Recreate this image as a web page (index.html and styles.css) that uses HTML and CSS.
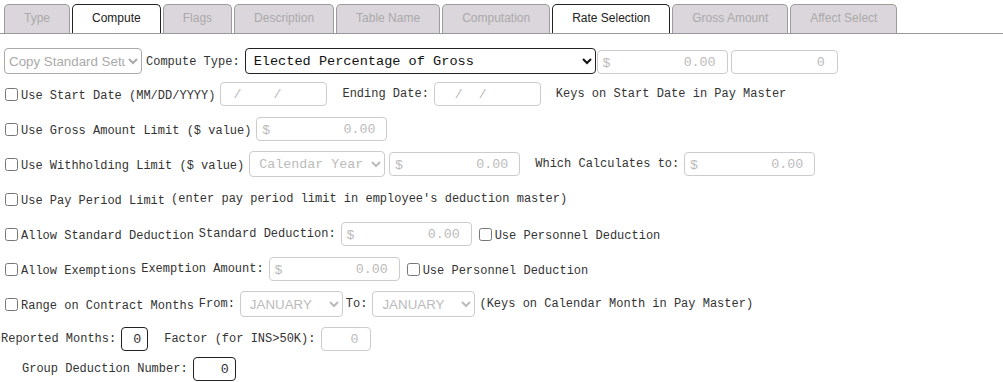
FILE: index.html
```html
<!DOCTYPE html>
<html lang="en">
<head>
  <meta charset="UTF-8">
  <meta name="viewport" content="width=device-width, initial-scale=1.0">
  <title>Deduction Setup - Compute</title>
  <link rel="stylesheet" href="styles.css">
</head>
<body>
  <!-- Abas do cadastro -->
  <ul class="tabs">
    <li>Type</li>
    <li class="active">Compute</li>
    <li>Flags</li>
    <li>Description</li>
    <li>Table Name</li>
    <li>Computation</li>
    <li class="active">Rate Selection</li>
    <li>Gross Amount</li>
    <li>Affect Select</li>
  </ul>

  <form class="compute-form">
    <div class="row">
      <select class="field copy-setup"><option>Copy Standard Setup</option></select>
      <span class="lbl gap4">Compute Type:</span>
      <select class="field compute-type"><option>Elected Percentage of Gross</option></select>
      <span class="money gap1"><span class="cur">$</span><input value="0.00"></span>
      <input class="field num count gap3" value="0">
    </div>

    <div class="row">
      <label class="check"><input type="checkbox"><span>Use Start Date (MM/DD/YYYY)</span></label>
      <input class="field date" value=" /    /">
      <span class="lbl gap15">Ending Date:</span>
      <input class="field date date-end" value="  /  /">
      <span class="lbl gap15">Keys on Start Date in Pay Master</span>
    </div>

    <div class="row">
      <label class="check"><input type="checkbox"><span>Use Gross Amount Limit ($ value)</span></label>
      <span class="money"><span class="cur">$</span><input value="0.00"></span>
    </div>

    <div class="row">
      <label class="check"><input type="checkbox"><span>Use Withholding Limit ($ value)</span></label>
      <select class="field year"><option>Calendar Year</option></select>
      <span class="money gap4"><span class="cur">$</span><input value="0.00"></span>
      <span class="lbl gap15">Which Calculates to:</span>
      <span class="money"><span class="cur">$</span><input value="0.00"></span>
    </div>

    <div class="row">
      <label class="check"><input type="checkbox"><span>Use Pay Period Limit</span></label>
      <span class="lbl gap6">(enter pay period limit in employee's deduction master)</span>
    </div>

    <div class="row">
      <label class="check"><input type="checkbox"><span>Allow Standard Deduction</span></label>
      <span class="lbl">Standard Deduction:</span>
      <span class="money"><span class="cur">$</span><input value="0.00"></span>
      <label class="check inline"><input type="checkbox"><span>Use Personnel Deduction</span></label>
    </div>

    <div class="row">
      <label class="check"><input type="checkbox"><span>Allow Exemptions</span></label>
      <span class="lbl">Exemption Amount:</span>
      <span class="money"><span class="cur">$</span><input value="0.00"></span>
      <label class="check inline"><input type="checkbox"><span>Use Personnel Deduction</span></label>
    </div>

    <div class="row">
      <label class="check"><input type="checkbox"><span>Range on Contract Months</span></label>
      <span class="lbl">From:</span>
      <select class="field month"><option>JANUARY</option></select>
      <span class="lbl gap3">To:</span>
      <select class="field month"><option>JANUARY</option></select>
      <span class="lbl gap4">(Keys on Calendar Month in Pay Master)</span>
    </div>

    <div class="row row-tight">
      <span class="lbl">Reported Months:</span>
      <input class="field num dark months" value="0">
      <span class="lbl gap16">Factor (for INS&gt;50K):</span>
      <input class="field num factor gap6" value="0">
    </div>

    <div class="row">
      <span class="lbl group-lbl">Group Deduction Number:</span>
      <input class="field num dark group" value="0">
    </div>
  </form>
</body>
</html>
```

FILE: styles.css
```css
/* Estilização geral */
body {
  margin: 0;
  font-family: "Liberation Mono", "DejaVu Sans Mono", monospace;
  font-size: 12px;
  color: #333;
  background: #fff;
}
/* Abas */
.tabs {
  display: flex;
  gap: 2px;
  list-style: none;
  margin: 0;
  padding: 4px 0 0 4px;
  border-bottom: 1px solid #999;
}
.tabs li {
  box-sizing: border-box;
  height: 29px;
  padding: 0 19px;
  line-height: 27px;
  font-family: "Liberation Sans", Arial, sans-serif;
  font-size: 12px;
  color: #aaa;
  background: #dbd6db;
  border: 1px solid #9c9c9c;
  border-bottom: none;
  border-radius: 5px 5px 0 0;
}
.tabs li.active {
  background: #fff;
  color: #222;
  border-color: #222;
}
/* Campos */
.field {
  box-sizing: border-box;
  height: 24px;
  font-family: "Liberation Mono", monospace;
  font-size: 13.33px;
  color: #bbb;
  background: #fff;
  border: 1px solid #ccc;
  border-radius: 4px;
  outline: none;
}
select.field {
  height: 26px;
  padding: 0 0 0 5px;
}
.copy-setup {
  width: 138px;
  padding-left: 0 !important;
  font-family: "Liberation Sans", Arial, sans-serif !important;
  color: #aaa !important;
  border-color: #aaa !important;
}
.compute-type {
  width: 351px;
  padding-left: 4px !important;
  font-size: 13.6px;
  color: #111 !important;
  border-color: #222 !important;
}
.year {
  width: 136px;
}
.month {
  width: 103px;
  font-family: "Liberation Sans", Arial, sans-serif !important;
}
.num {
  text-align: right;
  padding: 0 12px 0 4px;
}
.count {
  width: 107px;
}
.factor {
  width: 50px;
}
.dark {
  color: #333;
  border-color: #222;
  padding-right: 6px;
}
.months {
  width: 27px;
}
.group {
  width: 43px;
}
.date {
  width: 107px;
  padding: 0 4px;
  white-space: pre;
}
/* Valores em dólar */
.money {
  box-sizing: border-box;
  display: flex;
  align-items: center;
  width: 131px;
  height: 24px;
  border: 1px solid #ccc;
  border-radius: 4px;
}
.money .cur {
  padding-left: 5px;
  font-family: "Liberation Sans", Arial, sans-serif;
  font-size: 13.33px;
  color: #bbb;
}
.money input {
  flex: 1;
  min-width: 0;
  border: none;
  outline: none;
  padding: 0 11px 0 0;
  text-align: right;
  font-family: "Liberation Mono", monospace;
  font-size: 13.33px;
  color: #bbb;
  background: transparent;
}
/* Checkboxes */
.check {
  display: flex;
  align-items: center;
  white-space: pre;
}
.check input {
  width: 13px;
  height: 13px;
  margin: 0 3px 0 4px;
}
.check span {
  padding-top: 4px;
}
/* Formulário */
.compute-form {
  padding: 12px 0 0 1px;
}
.row {
  display: flex;
  align-items: center;
  height: 26px;
  margin-bottom: 9px;
}
.row:first-child {
  height: 28px;
  margin-bottom: 7px;
  align-items: flex-end;
}
.row:last-child {
  margin-bottom: 0;
}
.row-tight {
  margin-bottom: 4px;
}
.lbl {
  white-space: pre;
}
.row:first-child .lbl {
  align-self: center;
  padding-top: 4px;
}
.row > * + * {
  margin-left: 5px;
}
.row > .copy-setup { margin-left: 3px; }
.row > .gap1 { margin-left: 1px; }
.row > .gap3 { margin-left: 3px; }
.row > .gap4 { margin-left: 4px; }
.row > .gap6 { margin-left: 6px; }
.row > .gap15 { margin-left: 15px; }
.row > .gap16 { margin-left: 16px; }
.row > .group-lbl { margin-left: 21px; }
.row > .check.inline { margin-left: 3px; }
```
